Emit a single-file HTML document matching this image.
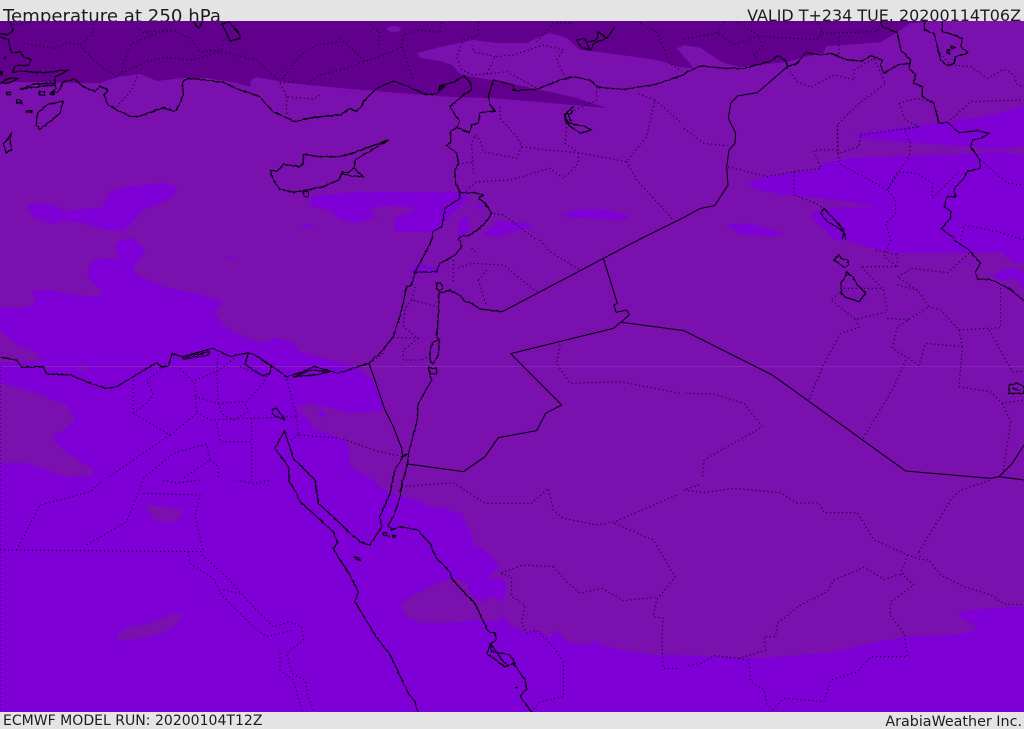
<!DOCTYPE html>
<html><head><meta charset="utf-8"><title>Temperature at 250 hPa</title>
<style>
html,body{margin:0;padding:0;background:#e4e4e4;width:1024px;height:729px;overflow:hidden}
svg{display:block}
text{font-family:"DejaVu Sans",sans-serif;fill:#1c1c1c}
.c path{fill:none;stroke:#000;stroke-width:3.4;stroke-linejoin:round}
.b path{fill:none;stroke:#000;stroke-width:3;stroke-linejoin:round}
.d path{fill:none;stroke:#0e0022;stroke-width:3.2;stroke-dasharray:3.5 8.5;stroke-linejoin:round}
</style></head><body>
<svg width="1024" height="729" viewBox="0 0 1024 729" xmlns="http://www.w3.org/2000/svg">
<defs><clipPath id="m"><rect x="0" y="21" width="1024" height="691"/></clipPath>
<filter id="j" x="-5%" y="-5%" width="110%" height="110%" color-interpolation-filters="sRGB"><feTurbulence type="fractalNoise" baseFrequency="0.12" numOctaves="2" seed="3"/><feDisplacementMap in="SourceGraphic" scale="7" xChannelSelector="R" yChannelSelector="G"/></filter></defs>
<rect width="1024" height="729" fill="#e4e4e4"/>
<text x="3" y="22" font-size="18.17">Temperature at 250 hPa</text>
<text x="1021" y="21" font-size="15.95" text-anchor="end">VALID T+234 TUE. 20200114T06Z</text>
<text x="3" y="725" font-size="14.04">ECMWF MODEL RUN: 20200104T12Z</text>
<text x="1022" y="726" font-size="14.3" text-anchor="end">ArabiaWeather Inc.</text>
<g clip-path="url(#m)">
<rect x="0" y="21" width="1024" height="691" fill="#7a10ae"/>
<!-- dark -->
<path fill="#61008c" d="M0,21 L0,82 L17,82 L100,83 L117,77 L140,74 L150,78 L157,81 L183,78 L207,78 L233,82 L250,87 L251,80 L257,77 L273,80 L290,83 L340,88 L423,95 L453,97 L490,98 L540,102 L607,108 L573,97 L527,87 L490,80 L460,74 L452,65 L440,61 L420,58 L417,53 L440,47 L473,40 L497,43 L527,43 L537,38 L550,33 L567,38 L580,50 L607,53 L657,60 L680,67 L692,68 L690,63 L684,57 L677,48 L684,45 L701,48 L714,57 L724,63 L741,67 L767,64 L787,62 L804,57 L824,53 L826,46 L857,44 L881,42 L897,32 L911,23 L944,21 Z"/>
<ellipse cx="394" cy="29" rx="7" ry="3" fill="#7a10ae"/>
<!-- bright -->
<g fill="#7f00d6">
<path d="M0,308 L20,308 L33,305 L35,300 L32,291 L50,290 L77,295 L97,297 L103,293 L93,283 L87,275 L90,263 L98,259 L117,258 L118,255 L115,247 L120,240 L133,238 L145,250 L140,260 L132,268 L140,277 L167,288 L197,293 L223,302 L214,313 L227,328 L250,340 L263,343 L275,337 L293,343 L300,352 L340,363 L353,365 L360,370 L373,380 L383,403 L382,410 L363,412 L347,413 L340,410 L322,406 L310,403 L297,407 L297,410 L310,420 L312,428 L340,438 L347,443 L350,457 L350,467 L370,478 L373,480 L383,490 L403,497 L417,500 L433,508 L445,507 L453,512 L462,513 L465,523 L472,533 L473,543 L483,550 L493,557 L500,568 L492,572 L490,577 L495,579 L502,577 L507,587 L503,603 L497,597 L487,597 L483,603 L468,593 L468,583 L453,578 L430,587 L410,597 L400,605 L407,617 L420,623 L450,623 L473,620 L497,622 L503,614 L510,625 L527,632 L537,630 L550,637 L557,630 L567,642 L587,645 L593,640 L607,647 L633,652 L653,655 L673,655 L684,655 L737,658 L761,658 L827,653 L877,642 L904,637 L961,634 L976,630 L974,625 L957,615 L961,611 L1024,606 L1024,712 L0,712 Z"/>
<path d="M27,207 L32,203 L50,204 L65,211 L103,207 L110,192 L130,186 L167,183 L178,188 L172,198 L140,212 L135,220 L123,231 L107,230 L77,222 L62,220 L53,224 L35,218 Z"/>
<path d="M310,197 L340,193 L373,192 L457,192 L467,192 L467,200 L457,210 L443,223 L433,232 L395,232 L395,218 L413,210 L415,207 L383,206 L368,210 L377,217 L357,223 L340,220 L330,210 L312,207 Z"/>
<ellipse cx="307" cy="226" rx="7" ry="1.5"/>
<path d="M459,223 L463,217 L469,218 L467,233 L458,237 Z"/>
<path d="M477,205 L485,205 L483,209 L477,209 Z"/>
<path d="M483,235 L500,220 L510,223 L522,222 L535,227 L510,232 L500,237 Z"/>
<path d="M562,215 L580,209 L607,210 L630,217 L623,220 L573,218 Z"/>
<path d="M727,225 L747,223 L784,233 L774,236 L741,235 Z"/>
<path d="M407,270 L420,265 L443,268 L437,273 L413,273 Z"/>
<path d="M852,135 L901,128 L937,123 L981,117 L1024,107 L1024,146 L1001,150 L951,145 L901,142 L861,138 Z"/>
<path d="M1024,155 L997,152 L951,155 L901,156 L851,158 L824,163 L817,170 L794,173 L764,177 L747,184 L757,190 L784,195 L817,198 L851,202 L877,207 L834,208 L812,213 L812,220 L824,228 L834,240 L847,240 L871,248 L897,253 L971,253 L1001,252 L1014,262 L1024,263 Z"/>
<path d="M992,275 L1001,271 L1014,268 L1024,272 L1024,290 L1017,278 L1001,281 Z"/>
<ellipse cx="230" cy="258" rx="4" ry="1.5"/>
</g>
<!-- mid islands in bright -->
<g fill="#7a10ae">
<path d="M0,383 L33,392 L67,405 L75,420 L67,427 L52,437 L60,447 L93,470 L93,475 L67,477 L27,463 L0,463 Z"/>
<path d="M0,330 L17,345 L37,353 L41,357 L37,362 L0,363 Z"/>
<path d="M145,504 L180,510 L182,515 L173,523 L153,519 Z"/>
<path d="M185,614 L170,615 L143,625 L130,627 L117,635 L120,641 L140,639 L163,633 L177,623 Z"/>
<ellipse cx="82" cy="368" rx="6" ry="2.5"/>
<ellipse cx="203" cy="592" rx="1.5" ry="2.5"/>
<circle cx="322" cy="414" r="3.5" fill="#7f00d6"/>
</g>
<rect x="0" y="366" width="1024" height="1" fill="#8a2ac0" opacity=".75"/>

<!-- tile 1 -->
<g transform="translate(0,0) scale(.33333)">
<g class="d">
<path d="M70,130 L100,135 L165,145 L200,128 L240,135 L275,105 L280,70"/>
<path d="M240,135 L285,185 L350,230 L365,220 L370,190 L395,130 L470,100 L520,90 L570,115 L600,155 L665,150 L670,120"/>
<path d="M365,220 L440,185 L500,172 L580,180 L660,155 L770,180 L840,245 L860,220 L900,165 L950,135 L1020,125"/>
<path d="M410,80 L430,98 L500,90"/>
<path d="M840,250 L860,290 L940,298 L960,285 M860,290 L860,355"/>
<path d="M920,250 L960,225 L1020,210 M410,230 L395,270 L350,320 M840,250 L880,245"/>
<path d="M40,75 L100,65"/>
</g>
<g class="c" filter="url(#j)">
<path d="M30,65 L40,90 L25,105 L0,100"/>
<path d="M0,110 L25,120 L35,160 L60,155 L72,172 L95,178 L85,195 L45,197 L37,218 L60,213 L130,218 L205,210 L165,232 L165,250 L100,252 L60,268 L100,262 L165,255 L170,265 L150,280 L175,275 L190,245 L225,238 L250,260 L285,275 L300,258 L325,270 L312,285 L325,315 L360,335 L395,350 L420,348 L490,323 L525,335 L540,310 L550,280 L547,245 L565,235 L600,238 L670,247 L720,270 L775,287 L820,335 L885,365 L940,352 L1020,345"/>
<path d="M190,302 L140,315 L112,340 L108,375 L120,387 L150,365 L180,340 Z"/>
<path d="M35,397 L22,420 L10,430 L18,458 L35,450 L30,420 Z"/>
<path d="M0,250 L25,235 L55,235 L30,248 Z"/>
<path d="M20,277 L32,277 L32,284 L20,284 Z M48,298 L60,300 L66,310 L50,308 Z M80,332 L95,332 L95,337 L80,337 Z M118,275 L134,275 L134,287 L118,285 Z M150,278 L162,278 L162,283 L150,283 Z M0,216 L8,216 L8,224 L0,224 Z M14,170 L16,170 L16,176 L14,176 Z"/>
<path d="M665,70 L690,68 L720,105 L720,115 L690,123 L680,100 Z"/>
<path d="M580,64 L595,85 L608,65"/>
<path d="M910,463 L910,490 L900,500 L850,493 L830,515 L810,510 L820,540 L840,568 L880,577 L920,570 L970,560 L1020,538"/>
<path d="M910,463 L960,470 L1020,470"/>
<path d="M910,575 L925,575 L925,590 L912,590 Z"/>
</g></g>

<!-- tile 2 -->
<g transform="translate(340,0) scale(.33333)">
<g class="d">
<path d="M0,115 L30,140 L75,185 L130,165 L185,140 L190,105 L240,90 L300,98 L305,65 M185,140 L220,240"/>
<path d="M0,210 L75,185 M115,135 L120,100 L85,68"/>
<path d="M415,65 L415,105 L370,120 L350,170 L365,210 L400,225 L440,222 L465,170 L520,165 L610,135 L670,150 L650,180 L675,230"/>
<path d="M465,170 L400,155 L395,130 M440,222 L500,215 L590,265 M590,125 L640,70 L700,70"/>
<path d="M480,320 L480,355 L530,410 L545,440 L620,450 L715,458 L860,485 L920,410 L945,300 L890,280 M945,300 L1020,365 M860,485 L890,540 L1000,660"/>
<path d="M715,458 L715,490 L670,535 L630,505 L510,540 L410,545 L380,570 M545,440 L530,475 L430,455 L420,420 L405,405 L395,430 L400,520 M355,490 L400,487"/>
<path d="M770,262 L770,300 L675,345 L680,380 L675,430 L715,458"/>
<path d="M450,640 L490,645 L590,720 M950,95 L990,190 L1020,210 M890,65 L950,95"/>
</g>
<g class="b"><path d="M895,720 L1032,652"/></g>
<g class="c" filter="url(#j)">
<path d="M0,345 L30,325 L48,335 L65,320 L70,305 L110,265 L160,243 L200,258 L262,285 L295,278 L300,258 L345,245 L370,228 L390,245 L395,270 L370,285 L330,320 L358,365 L350,382 L388,398 L395,375 L415,370 L420,338 L465,333 L450,315 L445,290 L460,240 L520,255 L520,272 L560,270 L590,268 L660,240 L700,230 L750,240 L775,262 L850,268 L940,255 L1032,224"/>
<path d="M350,382 L332,395 L332,430 L320,435 L350,460 L355,490 L345,510 L345,545 L360,578 L360,595 L315,625 L305,680 L280,695 L275,720"/>
<path d="M360,578 L405,578 L430,585 L415,595 L435,610 L455,640 L435,670 L405,695 L390,705 L360,710 L355,720"/>
<path d="M700,318 L675,345 L685,370 L735,380 L755,390 L720,400 L680,370 L672,345 L700,320 M700,330 L685,348 L695,365"/>
<path d="M710,120 L735,115 L750,150 L720,140 Z M735,128 L770,120 L775,95 L800,115 L825,80 L800,115 L760,130 L755,150"/>
<path d="M0,470 L50,455 L145,420 L70,465 L45,480 L42,505 L70,530 L30,528 L5,520 L0,535"/>
<path d="M5,515 L25,518 L40,505 M298,260 L315,258 L300,270 Z"/>
</g></g>

<!-- tile 3 -->
<g transform="translate(684,0) scale(.33333)">
<g class="d">
<path d="M0,118 L100,98 L150,135 L225,108 L320,115 L400,118 L415,100 L580,95 L590,70"/>
<path d="M160,65 L225,108 L235,140 L210,165 L225,180 M120,65 L100,98 M405,70 L415,100 M465,110 L465,170"/>
<path d="M310,205 L340,245 L380,262 L450,225 L510,240 L510,210 L570,175 L605,250 L520,315 L460,375 L460,450 L390,450 L410,505 L330,515 L250,530 L130,500"/>
<path d="M330,515 L330,585 L395,610 L420,625 M0,385 L60,430 L130,437"/>
<path d="M460,375 L465,490 L610,570 L640,515 L700,520 L745,550 L745,595 L800,540 L830,510 M530,410 L525,440 L470,458 L450,455"/>
<path d="M530,405 L705,380 L660,390 L680,430 L675,470 L610,570 L635,600 L635,640 L605,670 L620,720"/>
<path d="M645,310 L700,295 L750,310 M645,310 L665,360 L705,380 M800,360 L860,305 L1010,300"/>
<path d="M760,150 L800,195 L860,200 L910,235 L960,208 L990,225 L1000,255 L1020,258"/>
<path d="M830,720 L840,675 L940,695 L1020,720 M890,480 L970,550 L1020,555"/>
</g>
<g class="b"><path d="M310,200 L220,278 L160,288 L140,310 L133,355 L155,400 L153,430 L135,450 L128,500 L132,555 L92,617 L50,625 L0,652"/></g>
<g class="c" filter="url(#j)">
<path d="M0,220 L50,198 L120,205 L180,205 L255,185 L283,167 L305,183 L310,200 L340,190 L365,158 L410,165 L440,160 L490,180 L535,183 L560,167 L595,180 L590,195 L600,220 L640,195 L680,190"/>
<path d="M590,64 L595,80 L640,98 L650,150 L680,180 L675,205 L695,225 L688,250 L715,260 L715,290 L750,310 L765,370 L790,367 L825,398 L880,392 L915,400 L890,415 L865,420 L860,440 L888,480 L888,505 L850,515 L835,540 L810,565 L815,590 L790,590 L780,620 L800,635 L800,655 L772,685 L810,715"/>
<path d="M720,64 L722,90 L750,100 L760,140 L770,180 L790,197 L810,190 L815,170 L853,158 L830,140 L835,115 L795,100 L775,95 L775,65"/>
<path d="M800,138 L815,142 L805,146 Z M790,150 L798,150 L795,162 L788,158 Z"/>
<path d="M420,625 L410,640 L430,665 L480,695 L485,720 M420,625 L480,690 L475,720"/>
</g></g>

<!-- tile 4 -->
<g transform="translate(0,240) scale(.33333)">
<g class="d">
<path d="M400,420 L400,520 L510,585 L590,520 L585,430 L540,385"/>
<path d="M400,520 L440,490 L460,465 L440,420 L490,382 M585,470 L655,490 L650,395 L655,340"/>
<path d="M585,420 L650,395 L710,350 M655,490 L740,485 L790,430 L800,410 L720,380"/>
<path d="M655,490 L665,520 L700,540 L745,515 L735,490 M590,515 L630,540 L750,535 L890,530 L860,415"/>
<path d="M650,550 L660,605 L755,605 L755,720 M755,535 L755,605"/>
<path d="M890,530 L895,585 L1020,595 M895,585 L860,610 M510,585 L320,715"/>
<path d="M430,715 L520,640 L620,612 L630,660 L550,715 M630,660 L655,680 L655,720"/>
<path d="M0,380 L0,720"/>
</g>
<g class="c" filter="url(#j)">
<path d="M0,352 L50,360 L65,382 L130,380 L140,402 L210,405 L285,435 L320,445 L350,440 L470,368 L485,382 L505,378 L517,340 L545,350 L640,325 L690,350 L745,338 L765,345 L810,375 L860,410 L910,395 L940,380 L1020,400"/>
<path d="M545,355 L630,335 L625,345 L550,358"/>
<path d="M745,340 L735,372 L775,400 L790,408 L810,400 L815,378"/>
<path d="M880,410 L935,390 L990,395 L945,405 Z"/>
<path d="M815,510 L830,505 L855,540 L820,525 Z"/>
<path d="M855,570 L825,625 L865,680 L868,720"/>
<path d="M855,575 L880,655 L945,720"/>
</g></g>

<!-- tile 5 -->
<g transform="translate(340,240) scale(.33333)">
<g class="d">
<path d="M600,0 L630,35 L720,90 M355,85 L395,70 L490,75 L590,155 M340,60 L340,130 M415,120 L440,200 M415,120 L440,90"/>
<path d="M225,140 L215,180 L290,200 M215,180 L195,205 L190,260 L235,295 L190,330 L190,360 L245,360 L270,345 M160,292 L235,295 M130,340 L90,370 M395,25 L412,40"/>
<path d="M660,315 L650,370 L690,430 L840,425 L1020,460 M10,597 L100,630 L185,650"/>
</g>
<g class="b">
<path d="M487,215 L895,0"/>
<path d="M790,55 L832,190 L822,195 L828,217 L860,210 L868,225 L820,265 L512,341 L665,495 L617,520 L590,572 L475,593 L435,650 L370,695 L203,672"/>
<path d="M845,247 L1032,272"/>
<path d="M88,372 L135,510 L160,560 L185,625 L188,650"/>
</g>
<g class="c" filter="url(#j)">
<path d="M275,0 L250,50 L225,95 L215,135 L200,140 L185,210 L160,290 L120,340 L85,370 L0,398"/>
<path d="M360,0 L365,20 L345,45 L300,70 L290,95 L225,97"/>
<path d="M297,160 L295,230 L290,290 L297,300"/>
<path d="M290,130 L303,127 L307,145 L298,155 L290,145 Z"/>
<path d="M290,302 L298,302 L295,345 L280,370 L270,365 L270,330 L280,305 Z"/>
<path d="M270,405 L275,420 L235,490 L230,550 L205,640"/>
<path d="M265,383 L290,385 L290,402 L270,402 Z"/>
<path d="M297,160 L330,150 L365,170 L372,183 L395,190 L420,207 L487,215"/>
<path d="M207,640 L200,680 L190,720 M188,650 L165,690 L158,720 M188,650 L207,640"/>
</g></g>

<!-- tile 6 -->
<g transform="translate(684,240) scale(.33333)">
<g class="d">
<path d="M620,0 L600,50 L640,80 L530,80 L580,130 L598,145 L610,215 L515,238 L440,180 L480,145 L600,145 M640,40 L640,80 M575,30 L640,45"/>
<path d="M855,40 L790,98 L685,85 L640,110 L700,150 L735,200 L640,260 L625,325 L705,375 L725,310 L835,320 L825,270 L770,210 L735,200"/>
<path d="M610,235 L680,240 M640,135 L700,150 M825,270 L950,263 L950,140 M915,270 L985,395 L1020,395"/>
<path d="M835,320 L825,440 L920,455 L955,490 L1020,480 M955,490 L980,545 L955,710"/>
<path d="M515,238 L525,262 L470,280 L420,370 L375,480 M665,360 L630,440 L535,600"/>
<path d="M5,460 L90,462 L180,490 L235,560 L60,660 L55,715"/>
</g>
<g class="b">
<path d="M0,272 L265,405 L665,693 L920,715 L945,710 L1020,720"/>
<path d="M945,710 L985,670 L1020,615"/>
</g>
<g class="c" filter="url(#j)">
<path d="M465,43 L470,55 L490,60 L495,75 L480,82 L465,70 L450,60 Z"/>
<path d="M487,95 L487,105 L470,130 L472,160 L485,172 L525,185 L545,160 L520,135 L505,110 Z"/>
<path d="M810,0 L855,30 L890,70 L875,95 L880,118 L920,118 L975,145 L1020,182"/>
<path d="M975,435 L1000,430 L1020,440 L1020,460 L975,460 Z M985,445 L1010,452"/>
</g></g>

<!-- tile 7 -->
<g transform="translate(0,480) scale(.33333)">
<g class="d">
<path d="M50,210 L120,75 L270,35 L310,0 M260,195 L380,125 L430,0 M430,40 L600,45 L585,110 L610,215"/>
<path d="M0,210 L610,215 M565,215 L570,250 L640,295 L665,345 L760,440 L800,470 L880,450"/>
<path d="M605,225 L680,290 L760,380 L820,440 L870,425 L905,440 L910,480 L860,520 L875,580 L915,600 L925,650 L940,690"/>
<path d="M670,330 L720,340 M840,520 L840,570 L880,600 L905,690 M0,0 L0,690 M490,0 L530,10 L600,0 M710,0 L760,12 L810,0"/>
</g>
<g class="c" filter="url(#j)">
<path d="M865,0 L890,40 L900,65 L1000,155 L1012,188 L1000,205 L1020,240"/>
<path d="M945,0 L955,70 L1020,130"/>
</g></g>

<!-- tile 8 -->
<g transform="translate(340,480) scale(.33333)">
<g class="d">
<path d="M185,20 L340,8 L435,70 L575,70 L625,25 L640,90 L670,115 L770,135 L825,125 L1010,45"/>
<path d="M825,130 L940,180 L1005,290 L950,360 L940,410 L970,415 L965,480 L970,565 L1020,565"/>
<path d="M640,260 L550,255 L480,280 L515,290 L515,350 L555,375 L545,430 L560,460 L590,450 L640,500 L670,545 L670,650 L600,665 L575,695"/>
<path d="M640,260 L680,305 L720,340 L785,325 L850,362 L945,352"/>
</g>
<g class="c" filter="url(#j)">
<path d="M158,0 L150,40 L120,110 L125,140 L90,195 L65,188 L30,160 L0,130"/>
<path d="M187,0 L178,60 L160,110 L145,135 L155,150 L180,140 L235,150 L240,158 L270,190 L290,235 L330,275 L335,295 L375,340 L405,370 L445,455 L465,458 L470,480 L450,490 L445,510 L440,520 L495,560 L520,550 L555,600 L560,625 L540,650 L575,695"/>
<path d="M130,158 L140,158 L140,168 L130,166 Z M140,168 L150,170 M158,165 L168,166 L166,172 L158,171 Z M42,230 L55,233 L62,242 L48,238 Z"/>
<path d="M0,240 L30,285 L55,335 L45,365 L105,465 L150,525 L205,640 L225,665 L232,695"/>
<path d="M450,490 L455,515 L490,520 L510,525 L525,550 L505,555 L490,545 Z M525,622 L533,625"/>
</g></g>

<!-- tile 9 -->
<g transform="translate(684,480) scale(.33333)">
<g class="d">
<path d="M0,30 L60,38 L150,25 L290,38 L340,70 L405,68 L420,98 L520,98 L570,180 L670,225 L710,238 L735,240 L770,285 L840,320 L920,345 L960,372 L1020,375 M45,15 L0,30"/>
<path d="M670,225 L650,280 L690,315 L620,365 L618,405 L660,460 L670,530 L560,530 L520,575 L440,600 L420,665 L300,655 L265,690"/>
<path d="M705,215 L800,60 L830,30 L920,0 M705,215 L710,238"/>
<path d="M660,280 L600,298 L540,262 L450,300 L430,335 L350,375 L280,430 L275,470 L240,470 L245,510 L165,535 L90,527 L50,550 L10,557"/>
<path d="M165,535 L195,545 L200,605 L240,630 L250,675 L265,690"/>
</g></g>
</g>
</svg>
</body></html>
